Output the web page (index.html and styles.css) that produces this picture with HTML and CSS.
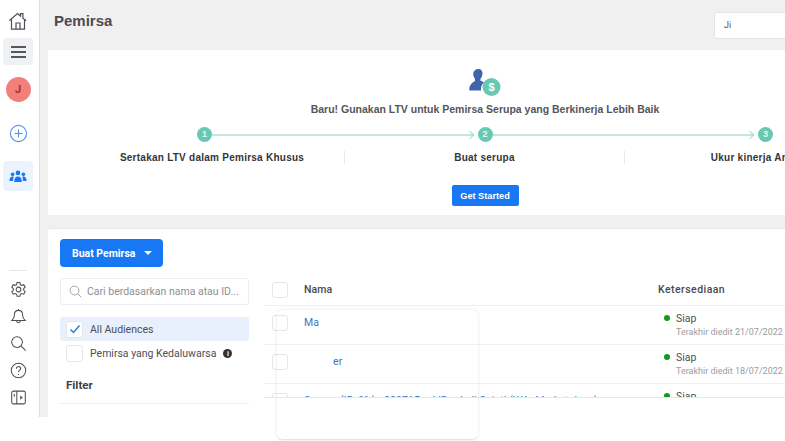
FILE: index.html
```html
<!DOCTYPE html>
<html lang="id">
<head>
<meta charset="utf-8">
<title>Pemirsa</title>
<link rel="stylesheet" href="styles.css">
</head>
<body>
<div class="app">
  <nav class="rail">
    <svg class="ico home" viewBox="0 0 20 20"><path d="M1.500 9.500 9.500 2.500l3 2.600V2.600h2.400v4.600l3.300 2.500M3.500 8.500v9.700h13V8.300M8 18v-6h4v6" /></svg>
    <div class="tile tile-grey"><span class="bars"><i></i><i></i><i></i></span></div>
    <div class="avatar">J</div>
    <svg class="ico plus" viewBox="0 0 20 20"><circle cx="10" cy="10" r="8.500"/><path d="M10 5.800v8.400M5.800 10h8.400"/></svg>
    <div class="tile tile-blue">
      <svg class="people" viewBox="0 0 20 14"><circle cx="10" cy="3" r="2.600"/><circle cx="4" cy="4.600" r="2"/><circle cx="16" cy="4.600" r="2"/><path d="M5.800 13c0-4 1.600-6 4.200-6s4.200 2 4.200 6zM.5 12c0-3 1.200-5 3.400-5 .6 0 1 .1 1.400.3C4.700 8.600 4.500 10.200 4.500 12zM19.500 12c0-3-1.200-5-3.400-5-.6 0-1 .1-1.400.3.6 1.300.8 2.900.8 4.700z"/></svg>
    </div>
    <div class="rail-spacer"></div>
    <div class="rail-rule"></div>
    <svg class="ico tool" viewBox="0 0 20 20"><path d="M8.300 1.800h3.400l.5 2.400 1.700.9 2.300-.8 1.700 3-1.800 1.600v2l1.800 1.600-1.700 3-2.300-.8-1.700.9-.5 2.400H8.300l-.5-2.400-1.700-.9-2.300.8-1.700-3 1.800-1.600v-2L2.100 7.300l1.700-3 2.300.8 1.700-.9z"/><circle cx="10" cy="10" r="2.800"/></svg>
    <svg class="ico tool" viewBox="0 0 20 20"><path d="M10 1.200v1.600M10 2.800c-3.200 0-4.800 2.300-4.800 5.200 0 3.500-1.200 5-3 6.700h15.600c-1.800-1.700-3-3.200-3-6.700 0-2.900-1.600-5.200-4.800-5.200zM7.800 15c0 3 4.400 3 4.400 0"/></svg>
    <svg class="ico tool" viewBox="0 0 20 20"><circle cx="8.300" cy="8.300" r="6.300"/><path d="m12.800 12.800 5.700 5.700"/></svg>
    <svg class="ico tool" viewBox="0 0 20 20"><circle cx="10" cy="10" r="8.500"/><path d="M7.500 7.800c0-3.200 5-3.200 5 0 0 2-2.500 2-2.500 4.200M10 14v1.200"/></svg>
    <svg class="ico tool" viewBox="0 0 20 20"><rect x="2" y="2.500" width="16" height="15" rx="2"/><path d="M8 2.500v15M5 6v3"/><path class="solid" d="m12 7.500 3 2.500-3 2.500z"/></svg>
  </nav>

  <main class="main">
    <header class="topbar">
      <h1 class="title">Pemirsa</h1>
      <div class="account">Ji</div>
    </header>

    <section class="hero">
      <svg class="hero-icon" viewBox="0 0 32 28">
        <path class="person" d="M9.500 1c2.700 0 4 2 4 4.500 0 2.300-.9 4-2 5.200v2.100c1.300.6 2.500 1.100 3.500 1.800-2 1.600-3 3.700-3 6.400 0 .5 0 1 .1 1.500H1.200c-.6 0-1-.4-1-1 0-4 2.300-6.700 5.800-8.600v-2.200c-1.100-1.200-1.800-2.900-1.800-5.200C4.500 3 6.800 1 9.500 1z"/>
        <circle class="coin" cx="22.500" cy="19" r="9"/>
        <text class="coin-text" x="22.500" y="23.200" text-anchor="middle">$</text>
      </svg>
      <p class="hero-lead">Baru! Gunakan LTV untuk Pemirsa Serupa yang Berkinerja Lebih Baik</p>
      <div class="track">
        <span class="dot">1</span><span class="link"></span>
        <span class="dot">2</span><span class="link"></span>
        <span class="dot">3</span>
      </div>
      <div class="steps">
        <div class="step step-first">Sertakan LTV dalam Pemirsa Khusus</div>
        <div class="step step-rule">Buat serupa</div>
        <div class="step step-rule step-last">Ukur kinerja Anda</div>
      </div>
      <button class="cta">Get Started</button>
    </section>

    <section class="listing">
      <aside class="filters">
        <button class="create">Buat Pemirsa <span class="caret"></span></button>
        <div class="search">
          <svg class="search-ico" viewBox="0 0 16 16"><circle cx="6.800" cy="6.800" r="5.500"/><path d="m10.800 10.800 4.400 4.400"/></svg>
          <span>Cari berdasarkan nama atau ID...</span>
        </div>
        <div class="opt opt-on">
          <span class="box"><svg viewBox="0 0 12 12"><path d="m1.500 6.500 3 3 6-7"/></svg></span>All Audiences
        </div>
        <div class="opt">
          <span class="box"></span>Pemirsa yang Kedaluwarsa <span class="info">i</span>
        </div>
        <h2 class="filter-title">Filter</h2>
      </aside>
      <div class="table">
        <div class="row row-head">
          <span class="box box-lg"></span>
          <span class="col-name">Nama</span>
          <span class="col-avail">Ketersediaan</span>
        </div>
        <div class="row">
          <span class="box box-lg"></span>
          <a class="col-name name-link">Ma</a>
          <div class="col-avail"><div class="status">Siap</div><div class="edited">Terakhir diedit 21/07/2022</div></div>
        </div>
        <div class="row">
          <span class="box box-lg"></span>
          <a class="col-name name-link name-gap">er</a>
          <div class="col-avail"><div class="status">Siap</div><div class="edited">Terakhir diedit 18/07/2022</div></div>
        </div>
        <div class="row">
          <span class="box box-lg"></span>
          <a class="col-name name-link">Serupa (ID, 0%) - 220715 – LIB – kali Sojati (WA+Marketplace)</a>
          <div class="col-avail"><div class="status">Siap</div><div class="edited">Terakhir diedit 15/07/2022</div></div>
        </div>
      </div>
    </section>
  </main>
</div>
<div class="ghost"></div>
</body>
</html>
```
FILE: styles.css
```css
* { box-sizing: border-box; }
html, body { margin: 0; padding: 0; height: 441px; overflow: hidden; background: #fff; }
body { font-family: Roboto, "Liberation Sans", sans-serif; color: #444950; position: relative; width: 785px; }
.app { display: flex; height: 417px; width: 785px; overflow: hidden; }

.rail { flex: 0 0 40px; height: 417px; border-right: 1px solid #dddfe2; background: #fff; display: flex; flex-direction: column; align-items: center; padding: 11px 3px 0 0; }
.ico { fill: none; stroke: #4b4f56; stroke-width: 1.200; display: block; }
.home { width: 20px; height: 20px; margin-bottom: 7px; }
.tile { width: 30px; border-radius: 4px; display: flex; align-items: center; justify-content: center; }
.tile-grey { height: 27px; background: #f0f1f2; margin-bottom: 12px; }
.bars { display: flex; flex-direction: column; gap: 3px; width: 15px; }
.bars i { display: block; height: 2px; background: #55585e; }
.avatar { width: 25px; height: 25px; border-radius: 50%; background: #f27f7a; color: #a53232; font-size: 11px; font-weight: 700; display: flex; align-items: center; justify-content: center; margin-bottom: 22px; }
.plus { width: 19px; height: 19px; stroke: #5b93e0; margin-bottom: 18px; }
.tile-blue { height: 30px; background: #eaf3fe; }
.people { width: 18px; height: 13px; fill: #1877f2; }
.rail-spacer { flex: 1; }
.rail-rule { width: 18px; height: 1px; background: #e6e7e9; margin-bottom: 10px; }
.tool { width: 17px; height: 17px; margin-bottom: 10px; }
.tool .solid { fill: #4b4f56; stroke: none; }
.tool:last-child { margin-bottom: 11px; }

.main { flex: 0 0 882px; background: #f0f0f1; padding: 0 0 0 8px; }
.topbar { height: 50px; display: flex; align-items: flex-start; justify-content: space-between; }
.title { margin: 11px 0 0 6px; font: 700 15px/20px "Liberation Sans", sans-serif; color: #4b4c4f; }
.account { width: 160px; height: 27px; margin: 12px 48px 0 0; background: #fff; border: 1px solid #e4e5e7; border-radius: 3px; font-size: 9px; line-height: 25px; padding-left: 9px; color: #55585e; }

.hero { width: 874px; height: 165px; background: #fff; display: flex; flex-direction: column; align-items: center; padding-top: 18px; }
.hero-icon { width: 32px; height: 28px; display: block; }
.person { fill: #3f63ad; }
.coin { fill: #68c9b3; }
.coin-text { fill: #fff; font: 700 11px "Liberation Sans", sans-serif; }
.hero-lead { margin: 6px 0 0; font: 700 10.500px/15px "Liberation Sans", sans-serif; color: #55565b; white-space: nowrap; }
.track { width: 576px; margin: 10px 0 0 149px; display: flex; align-items: center; align-self: flex-start; }
.dot { flex: 0 0 15px; height: 15px; border-radius: 50%; background: #68c9b3; color: #e8f7f3; font: 700 9px/15px "Liberation Sans", sans-serif; text-align: center; }
.link { flex: 1; height: 2px; margin-right: 5px; background: #c2e7e0; position: relative; }
.link::after { content: ""; position: absolute; right: 0; top: -2px; width: 5px; height: 5px; border-top: 1px solid #a5dbd0; border-right: 1px solid #a5dbd0; transform: rotate(45deg); }
.steps { align-self: flex-start; margin: 9px 0 0 16px; display: grid; grid-template-columns: repeat(3, 280px); }
.step { font: 700 10px/13px "Liberation Sans", sans-serif; letter-spacing: .25px; color: #34363a; text-align: center; white-space: nowrap; }
.step-first { padding-left: 16px; }
.step-last { padding-right: 18px; }
.step-rule { border-left: 1px solid #e6e7e9; }
.cta { margin-top: 21px; width: 67px; height: 21px; border: 0; border-radius: 2px; background: #1877f2; color: #fff; font: 700 9.200px "Liberation Sans", sans-serif; padding: 0; }

.listing { width: 874px; height: 189px; margin-top: 13px; background: #fff; border-top: 1px solid #e6e7e9; border-radius: 3px 3px 0 0; display: flex; }
.filters { flex: 0 0 216px; padding: 10px 15px 0 12px; }
.create { display: flex; align-items: center; gap: 9px; width: 103px; height: 28px; border: 0; border-radius: 4px; background: #1877f2; color: #fff; font: 700 10.500px "Roboto", sans-serif; padding: 0 0 0 12px; }
.caret { width: 0; height: 0; border: 4px solid transparent; border-top: 4px solid #fff; border-bottom: 0; }
.search { display: flex; align-items: center; gap: 5px; height: 27px; margin-top: 11px; border: 1px solid #ebedf0; border-radius: 3px; padding-left: 8px; font-size: 10.500px; color: #8d9096; white-space: nowrap; overflow: hidden; }
.search-ico { flex: 0 0 13px; height: 13px; fill: none; stroke: #8d9096; stroke-width: 1; }
.opt { display: flex; align-items: center; gap: 7px; height: 24px; padding-left: 6px; font-size: 10.500px; color: #4b4f56; white-space: nowrap; }
.opt-on { margin-top: 12px; background: #e7f0fc; border-radius: 3px; }
.box { flex: 0 0 17px; height: 17px; background: #fff; border: 1px solid #e4e6e9; border-radius: 3px; display: flex; align-items: center; justify-content: center; }
.box svg { width: 12px; height: 12px; fill: none; stroke: #2d7ae0; stroke-width: 1.500; }
.info { display: inline-block; width: 9px; height: 9px; border-radius: 50%; background: #303236; color: #fff; font: 700 7px/9px "Liberation Sans", sans-serif; text-align: center; }
.filter-title { margin: 0; padding: 13px 0 11px 6px; border-bottom: 1px solid #eceef0; font: 700 11.500px/14px Roboto, sans-serif; color: #3f4246; }

.table { flex: 1; height: 169px; align-self: flex-start; overflow: hidden; border-bottom: 1px solid #e6e7e9; }
.row { display: flex; align-items: flex-start; height: 39px; border-top: 1px solid #eef0f2; padding: 7px 0 0 8px; font-size: 10.500px; }
.row-head { height: 76px; border-top: 0; align-items: center; padding-top: 45px; font-weight: 500; color: #444950; }
.box-lg { flex: 0 0 16px; height: 16px; margin-top: 2px; }
.row-head .box-lg { margin-top: 0; }
.col-name { flex: 0 0 354px; margin-left: 16px; white-space: nowrap; letter-spacing: .1px; }
.name-link { color: #3a76c4; padding-top: 3px; }
.name-gap { padding-left: 29px; }
.col-avail { flex: 1; }
.row-head .col-avail { letter-spacing: .45px; }
.status { position: relative; padding-left: 18px; color: #4b4f56; line-height: 12px; }
.status::before { content: ""; position: absolute; left: 6px; top: 2px; width: 6px; height: 6px; border-radius: 50%; background: #0f9920; }
.edited { padding-left: 18px; font-size: 9px; line-height: 13px; color: #9a9ca1; margin-top: 1px; white-space: nowrap; }

.ghost { position: absolute; left: 277px; top: 310px; width: 201px; height: 130px; border-radius: 6px; border-bottom: 1px solid #e2e3e6; box-shadow: 0 0 3px rgba(0,0,0,.12); }
```
